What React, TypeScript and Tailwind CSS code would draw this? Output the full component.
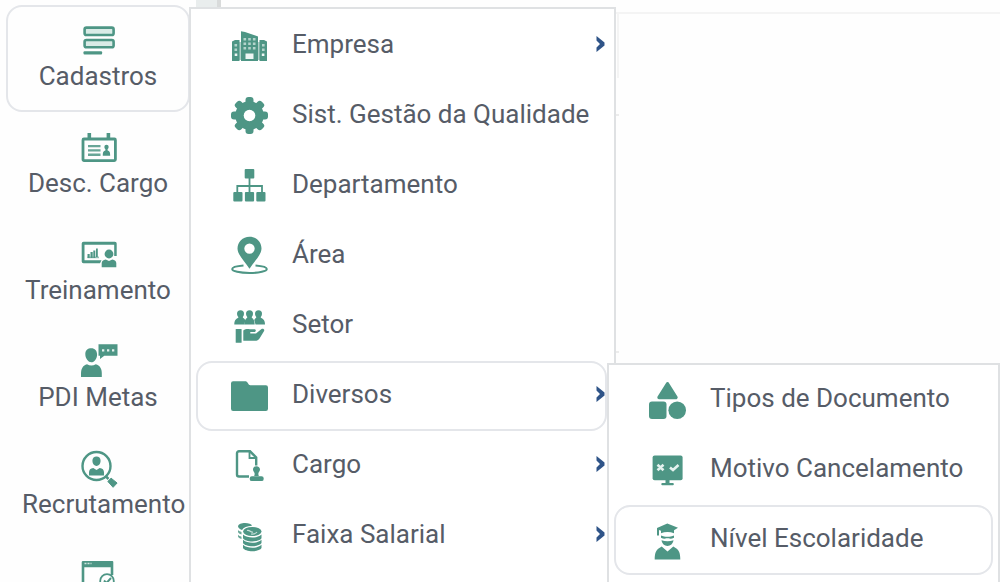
import type { ReactNode } from 'react'
import clsx from 'clsx'

interface Entry {
  label: string
  icon: ReactNode
  active?: boolean
  children?: Entry[]
  hasChildren?: boolean
}

function Icon({ children }: { children: ReactNode }) {
  return (
    <svg
      viewBox="0 0 37 37"
      className="h-[37px] w-[37px] shrink-0 overflow-visible text-[#4e9685]"
      fill="currentColor"
      aria-hidden="true"
    >
      {children}
    </svg>
  )
}

function Chevron() {
  return (
    <svg viewBox="0 0 10 18" className="mb-1 h-[18px] w-[10px] shrink-0" aria-hidden="true">
      <path d="M1.500 1 L9.500 7.500 V10.500 L1.500 17 V12.500 L5 9 L1.500 5.500 Z" fill="#2f5488" />
    </svg>
  )
}

const FormsIcon = (
  <Icon>
    <g fill="#d9ebe6" stroke="currentColor" strokeWidth="2.6">
      <rect x="4.6" y="4.6" width="29" height="7.4" rx="1.8" />
      <rect x="4.6" y="17" width="29" height="7.2" rx="1.8" />
    </g>
    <rect x="3.5" y="28.3" width="18.6" height="3.2" rx="1" />
  </Icon>
)

const BadgeIcon = (
  <Icon>
    <rect x="3" y="9" width="32.4" height="21.6" rx="1" fill="none" stroke="currentColor" strokeWidth="2.8" />
    <rect x="7.5" y="3" width="3.6" height="6" />
    <rect x="26.6" y="3" width="3.6" height="6" />
    <path d="M8 15h12.500v2.300H8zM8 19.300h12.500v2.300H8zM8 23.600h12.500v2.300H8z" opacity=".85" />
    <circle cx="26.500" cy="17" r="2.200" />
    <path d="M25.400 17h2.200v3.500c2 .4 2.600 1.600 2.600 5.300h-7.400c0-3.700.6-4.900 2.600-5.300z" />
  </Icon>
)

const TrainingIcon = (
  <Icon>
    <path d="M3.500 4.700h31.400a1.800 1.800 0 0 1 1.800 1.800V19h-2.500V7.700H4.500v15.500h17l-1.500 3.100H3.500a1.800 1.800 0 0 1-1.800-1.800v-18a1.800 1.800 0 0 1 1.800-1.800z" />
    <path d="M7.500 17h2.200v4H7.500zM10.500 15h2.200v6h-2.200zM13.300 13.500h2v7.500h-2zM16 11.500h1.800V20H16z" />
    <rect x="7.500" y="19.600" width="11.500" height="1.600" opacity=".6" />
    <circle cx="29" cy="17" r="4.400" />
    <path d="M21.700 30.200v-4c0-2 1.500-3.400 4-3.700l3.300 1.500 3.300-1.500c2.500.3 4 1.700 4 3.700v4z" />
  </Icon>
)

const CoachIcon = (
  <Icon>
    <path d="M5.300 10c0-4 2.500-5.800 6-5.800s5.800 2.400 5.800 6.300c0 4.200-2.800 7.800-5.800 7.800s-6-3.800-6-8.300z" />
    <path d="M1 33v-3.500c0-5 2-8 6-9.200 3 1.600 5.800 1.600 8.800 0 4 1.200 6 4.200 6 9.200V33z" />
    <path d="M18.500.3h19v11.400H24.300L20 15v-3.300h-1.500z" />
    <path d="M22 5.200h2.300v2.300H22zM27 5.200h2.300v2.300H27zM32 5.200h2.300v2.300H32z" fill="#e3f0ed" />
  </Icon>
)

const RecruitIcon = (
  <Icon>
    <circle cx="16.500" cy="15" r="14" fill="none" stroke="currentColor" strokeWidth="2.400" />
    <path d="M12.400 9.800c0-2.800 1.700-4.300 4.100-4.300s4.100 1.500 4.100 4.300-1.900 5.200-4.100 5.200-4.100-2.400-4.100-5.200z" />
    <path d="M9 24.500v-3.200c0-2.600 1.500-4 4.300-4.400l3.200 2 3.200-2c2.800.4 4.300 1.800 4.300 4.400v3.200z" />
    <path d="M26 25.500l2.500 2.500" stroke="currentColor" strokeWidth="2.500" />
    <path d="M27.800 30.400l3.300-3.200 6 4.800-4 4.300z" stroke="currentColor" strokeWidth="1" strokeLinejoin="round" />
  </Icon>
)

const WindowIcon = (
  <Icon>
    <path d="M3 3h29.300a1 1 0 0 1 1 1v13h-2.600V9.200H4.300V40H1.700V4.300A1.300 1.300 0 0 1 3 3z" />
    <path d="M4.500 5.500h2M7.500 5.500h2M10.500 5.500h1" stroke="#cfe5df" strokeWidth="1.500" />
    <circle cx="27" cy="23" r="6.800" fill="none" stroke="currentColor" strokeWidth="1.800" />
    <path d="M24 22.500l2.500 2.500 4.500-5" fill="none" stroke="currentColor" strokeWidth="2" />
  </Icon>
)

const BuildingsIcon = (
  <Icon>
    <path d="M1 33V13.500l3-1.500h4.500v21zM28.500 33V12H33l3 1.500V33z" />
    <path d="M8 14h2v18H8zM27 14h2v18h-2z" opacity=".45" />
    <path d="M10 33V3.300l4 .7 13 4.500V33z" />
    <g fill="#b4d4cc">
      <path d="M12.500 10h2.600v2.600h-2.600zM17.200 10h2.600v2.600h-2.600zM21.900 10h2.600v2.600h-2.600z" />
      <path d="M12.500 14.500h2.600v2.600h-2.600zM17.200 14.500h2.600v2.600h-2.600zM21.900 14.500h2.600v2.600h-2.600z" />
      <path d="M12.500 19h2.600v2.600h-2.600zM17.200 19h2.600v2.600h-2.600zM21.900 19h2.600v2.600h-2.600z" />
      <path d="M3.500 16h2.600v2.400H3.500zM3.500 20.500h2.600v2.400H3.500zM31 16h2.600v2.400H31zM31 20.500h2.600v2.400H31z" />
    </g>
    <path d="M14.500 25.500h8v5.500h-8zM3.700 25.500h2.600V28H3.700zM30.800 25.500h2.600V28h-2.600z" fill="#eef6f4" />
  </Icon>
)

const GearIcon = (
  <Icon>
    <g transform="translate(18.500 17.500)">
      <circle r="14.300" />
      <rect x="-4" y="-18.500" width="8" height="37" rx="3" />
      <rect x="-4" y="-18.500" width="8" height="37" rx="3" transform="rotate(45)" />
      <rect x="-4" y="-18.500" width="8" height="37" rx="3" transform="rotate(90)" />
      <rect x="-4" y="-18.500" width="8" height="37" rx="3" transform="rotate(135)" />
      <circle r="5.800" fill="#fff" />
    </g>
  </Icon>
)

const OrgIcon = (
  <Icon>
    <rect x="13.700" y="1" width="9.600" height="9.600" rx="1" />
    <path d="M18.500 10v14M6.300 24v-6h24.700v6" fill="none" stroke="currentColor" strokeWidth="1.800" />
    <rect x="2.300" y="24" width="9.200" height="9.500" rx="1" />
    <rect x="13.900" y="24" width="9.200" height="9.500" rx="1" />
    <rect x="25.300" y="24" width="9.200" height="9.500" rx="1" />
  </Icon>
)

const PinIcon = (
  <Icon>
    <path
      fillRule="evenodd"
      d="M18.500-1.300c6.900 0 12 5.200 12 11.800 0 6.500-7.500 13-12 20.300C14 23.500 6.500 17 6.500 10.500c0-6.600 5.100-11.800 12-11.800zm0 6.700a5.200 5.200 0 1 0 0 10.400 5.200 5.200 0 0 0 0-10.400z"
    />
    <path
      d="M12.500 27.500C6 28 1.200 29.300 1.200 31c0 2.200 7.500 4 17.300 4s17.300-1.800 17.300-4c0-1.700-4.800-3-11.300-3.500"
      fill="none"
      stroke="currentColor"
      strokeWidth="2"
    />
  </Icon>
)

const SectorIcon = (
  <Icon>
    <circle cx="9.500" cy="5.800" r="3.500" />
    <circle cx="18.500" cy="5.800" r="3.500" />
    <circle cx="27.500" cy="5.800" r="3.500" />
    <path d="M3.300 16.600c0-4 1.400-5.600 4-6.800V7.500h4.600v2.300c1.200.6 1.900 1.400 2.400 2.600l-1 4.200z" />
    <path d="M13.300 16.600c.3-3.800.9-5.600 2.900-6.800V7.500h4.600v2.300c2 1.200 2.600 3 2.900 6.800z" />
    <path d="M34 16.600c0-4-1.400-5.600-4.200-6.800V7.500h-4.600v2.300c-1 .5-1.700 1.200-2 2.200l1.300 4.600z" />
    <rect x="4.700" y="21" width="5.900" height="13.800" rx=".6" />
    <path d="M12.300 22.500c2-1.500 4.500-1.700 6.500-1.200h5c1.300.2 1.300 2.300 0 2.600h-4.500v1.500H25l5.500-4.500c1.600-.7 3.300.3 2.600 2l-4.600 7.600c-1 1.600-2.400 2.300-4.500 2.300H12.300z" />
  </Icon>
)

const FolderIcon = (
  <Icon>
    <path d="M2.300 3.300h12.500c1.800 0 2.500 4 4.500 4h15.400A2.200 2.200 0 0 1 37 9.500v21.300a2.200 2.200 0 0 1-2.300 2.200H2.300A2.200 2.200 0 0 1 0 30.800V5.500a2.200 2.200 0 0 1 2.300-2.200z" />
  </Icon>
)

const DocStampIcon = (
  <Icon>
    <path
      d="M18 28.500H8a2 2 0 0 1-2-2V5.300a2 2 0 0 1 2-2h11l6.200 6.200v8"
      fill="none"
      stroke="currentColor"
      strokeWidth="2.400"
    />
    <path d="M18.500 3.500v6.500H25" fill="none" stroke="currentColor" strokeWidth="1.800" />
    <path d="M22 21.500c0-2 1.400-3.300 3.500-3.300s3.500 1.300 3.500 3.300-1.700 2.500-1.700 4.500l.5 2h-4.600l.5-2c0-2-1.700-2.500-1.700-4.500z" />
    <rect x="18.700" y="28.300" width="14" height="4.800" rx="2.200" />
  </Icon>
)

const CoinsIcon = (
  <Icon>
    <path d="M7 8.300C7.500 6 10.500 5 14 5s6.500 1 7 2.800c-5 .2-8.500 1.700-10 4.200C8.500 11.200 7 9.500 7 8.300z" />
    <path d="M7 12c1 1 2 1.500 3.500 2v2.500C8.500 16 7.300 15 7 14zM7 16.800c1 1 2 1.500 3.500 2V21c-2-.5-3.200-1.500-3.500-2.500z" opacity=".85" />
    <ellipse cx="21.300" cy="13.500" rx="9.200" ry="4.600" />
    <path d="M16 12.500c3-1 3.500 2.500 6 1.500M20 16c2.500.2 5-.6 6-2" fill="none" stroke="#c5dfd8" strokeWidth="1.200" />
    <path d="M12 16.500c2.500 2.300 6 3 9.300 3s6.700-.7 9.200-3v3.700c-1 2-5 3.200-9.200 3.200S13 22.200 12 20.200z" />
    <path d="M12 21.800c2.500 2.300 6 3 9.300 3s6.700-.7 9.200-3V25c-1 2-5 3.200-9.200 3.200S13 27 12 25z" />
    <path d="M12 26.800c2.500 2.300 6 3 9.300 3s6.700-.7 9.200-3V30c-1 2-5 3.200-9.200 3.200S13 32 12 30z" />
  </Icon>
)

const ShapesIcon = (
  <Icon>
    <path
      d="M18.500 1.800L27 15.500H10z"
      stroke="currentColor"
      strokeWidth="3.400"
      strokeLinejoin="round"
    />
    <rect x="0" y="19.500" width="17.500" height="17.500" rx="3" />
    <circle cx="28.200" cy="28.200" r="8.800" />
  </Icon>
)

const BoardIcon = (
  <Icon>
    <rect x="3.600" y="3.500" width="30" height="24.800" rx="2" />
    <rect x="16.500" y="28" width="4" height="4" />
    <rect x="12.300" y="31" width="12.500" height="2.300" rx="1" />
    <path d="M8.500 12.800l6 5.400M14.500 12.800l-6 5.400M21 15.500l3 2.500 5.500-5" fill="none" stroke="#e6f2ef" strokeWidth="2.600" />
  </Icon>
)

const GraduateIcon = (
  <Icon>
    <path d="M18.300 1.500L29 5.800l-4 2.400v3c-4-1.600-9-1.600-13 0V8.800l-2-.8v5.500H8V6z" />
    <path d="M12 13.500c4 1.800 9 1.800 13 0v2.300c-2 1-4 1.200-5.300.5h-2.400c-1.300.7-3.300.5-5.300-.5z" />
    <path d="M12.500 18.300c4 1.200 8 1.200 12 0-.5 3.500-3 5.700-6 5.700s-5.500-2.200-6-5.700z" />
    <path d="M5.700 37.500c0-7 1.300-10 7-13l5.800 5 5.800-5c5.700 3 7 6 7 13z" />
  </Icon>
)

const sidebar: Entry[] = [
  { label: 'Cadastros', icon: FormsIcon, active: true },
  { label: 'Desc. Cargo', icon: BadgeIcon },
  { label: 'Treinamento', icon: TrainingIcon },
  { label: 'PDI Metas', icon: CoachIcon },
  { label: 'Recrutamento', icon: RecruitIcon },
  { label: '', icon: WindowIcon },
]

const diversos: Entry[] = [
  { label: 'Tipos de Documento', icon: ShapesIcon },
  { label: 'Motivo Cancelamento', icon: BoardIcon },
  { label: 'Nível Escolaridade', icon: GraduateIcon, active: true },
]

const cadastros: Entry[] = [
  { label: 'Empresa', icon: BuildingsIcon, hasChildren: true },
  { label: 'Sist. Gestão da Qualidade', icon: GearIcon },
  { label: 'Departamento', icon: OrgIcon },
  { label: 'Área', icon: PinIcon },
  { label: 'Setor', icon: SectorIcon },
  { label: 'Diversos', icon: FolderIcon, active: true, hasChildren: true, children: diversos },
  { label: 'Cargo', icon: DocStampIcon, hasChildren: true },
  { label: 'Faixa Salarial', icon: CoinsIcon, hasChildren: true },
]

function MenuRow({ entry }: { entry: Entry }) {
  return (
    <li className="relative">
      <a
        href="#"
        className={clsx(
          'flex h-[70px] items-center rounded-2xl border-2 pl-[33px] whitespace-nowrap',
          entry.active ? 'border-[#e4e6ea]' : 'border-transparent',
        )}
      >
        {entry.icon}
        <span className="ml-6 flex-1 pb-1">{entry.label}</span>
        {entry.hasChildren && <Chevron />}
      </a>
      {entry.children && (
        <ul className="absolute top-[2px] left-full w-[393px] border-2 border-[#dfe1e3] bg-white px-[5px] pb-6">
          {entry.children.map((child) => (
            <MenuRow key={child.label} entry={child} />
          ))}
        </ul>
      )}
    </li>
  )
}

function Sidebar() {
  return (
    <nav className="w-[190px] shrink-0 pt-[5px] pl-[6px]">
      {sidebar.map((entry, i) => (
        <a
          key={i}
          href="#"
          className={clsx(
            'flex h-[107px] flex-col items-center rounded-2xl border-2 px-[14px] pt-4 whitespace-nowrap',
            entry.active ? 'border-[#e4e6ea]' : 'border-transparent',
          )}
        >
          {entry.icon}
          <span className="w-full text-center leading-8">{entry.label}</span>
        </a>
      ))}
    </nav>
  )
}

export default function App() {
  return (
    <div className="relative flex h-screen overflow-hidden bg-[#fefefe] font-['Roboto',sans-serif] text-[26px] text-[#565c67]">
      <Sidebar />
      <div className="ml-[6px] w-[25px] shrink-0 border-r-4 border-[#d9dbdb] bg-[#e9eded]" />
      <main className="flex-1 pt-3">
        <section className="border-t-2 border-[#f4f4f4]">
          <div className="h-16 w-[398px] border-r-2 border-[#f4f4f4]" />
          <div className="mt-9 h-[239px] w-[398px] border-y-2 border-[#ececec]" />
        </section>
      </main>
      <ul className="absolute top-[7px] left-[189px] h-full w-[427px] border-2 border-[#dfe1e3] bg-white pt-[2px] pr-[7px] pl-[5px]">
        {cadastros.map((entry) => (
          <MenuRow key={entry.label} entry={entry} />
        ))}
      </ul>
    </div>
  )
}
